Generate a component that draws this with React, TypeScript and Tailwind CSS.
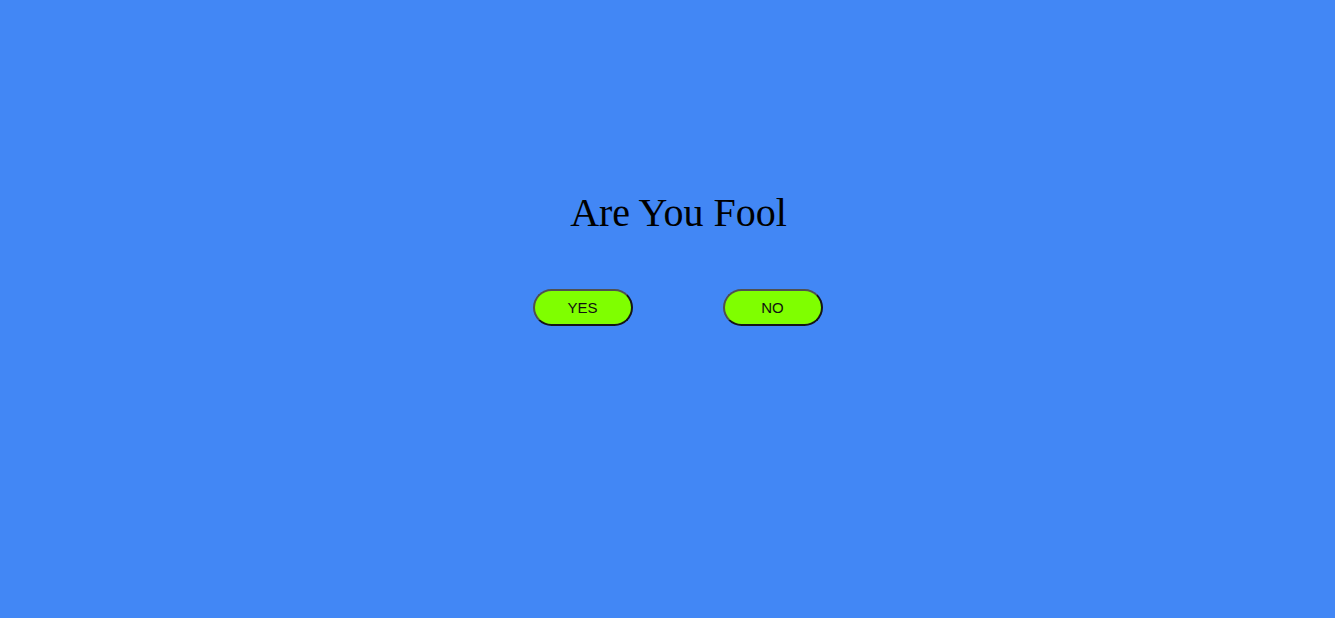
export default function App() {
  return (
    <div className="w-full h-[618px] bg-[#4287f5] flex flex-col items-center pl-[22px]">
      <h1 className="mt-[189px] text-[40px] leading-[48px] text-black font-['Liberation_Serif',serif]">
        Are You Fool
      </h1>
      <div className="mt-[52px] mr-[2px] flex gap-[90px]">
        <button className="w-[100px] h-[37px] rounded-full bg-[#7fff00] border-2 border-t-[#505050] border-l-[#505050] border-b-[#151515] border-r-[#151515] text-[15px] leading-none text-[#111] font-['Liberation_Sans',sans-serif]">
          YES
        </button>
        <button className="w-[100px] h-[37px] rounded-full bg-[#7fff00] border-2 border-t-[#505050] border-l-[#505050] border-b-[#151515] border-r-[#151515] text-[15px] leading-none text-[#111] font-['Liberation_Sans',sans-serif]">
          NO
        </button>
      </div>
    </div>
  );
}
